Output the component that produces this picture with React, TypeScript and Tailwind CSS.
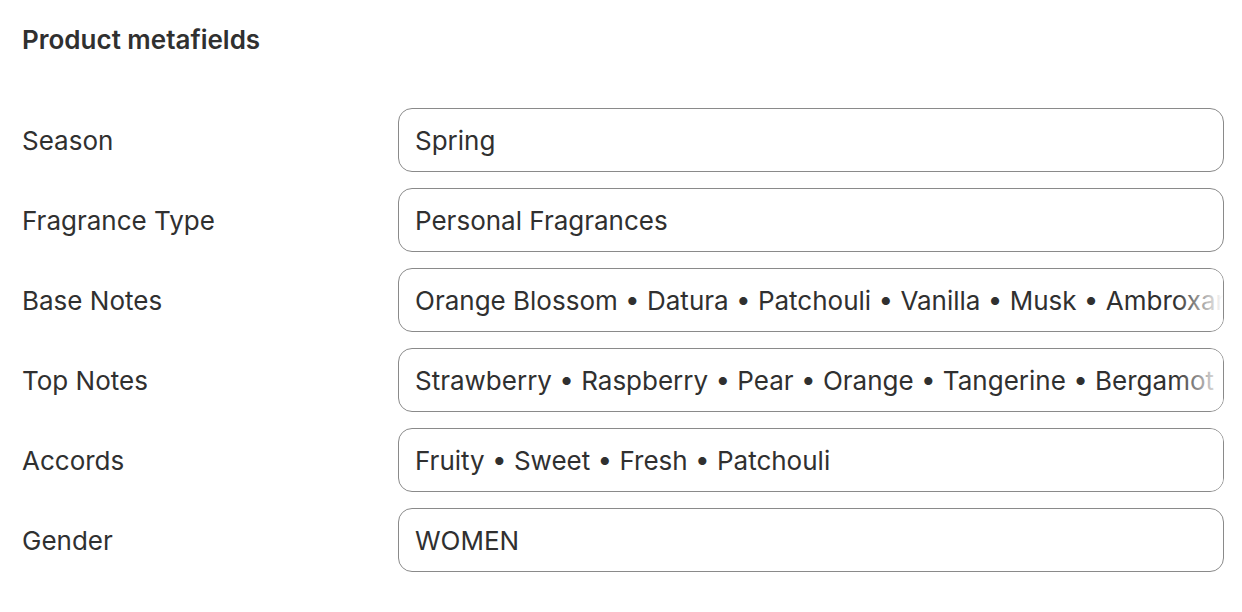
import React from "react";

const rows: { label: string; value: string; fade?: boolean }[] = [
  { label: "Season", value: "Spring" },
  { label: "Fragrance Type", value: "Personal Fragrances" },
  { label: "Base Notes", value: "Orange Blossom • Datura • Patchouli • Vanilla • Musk • Ambroxan", fade: true },
  { label: "Top Notes", value: "Strawberry • Raspberry • Pear • Orange • Tangerine • Bergamot", fade: true },
  { label: "Accords", value: "Fruity • Sweet • Fresh • Patchouli", fade: true },
  { label: "Gender", value: "WOMEN" },
];

export default function App() {
  return (
    <div
      className="w-[1242px] h-[612px] bg-white text-[#303030] pl-[22px] pr-[18px] pt-[24px]"
      style={{ fontFamily: "Inter, 'Noto Sans', sans-serif" }}
    >
      <h2 className="text-[26px] leading-[32px] font-semibold">Product metafields</h2>
      <div className="mt-[52px] flex flex-col gap-[16px]">
        {rows.map((r) => (
          <div key={r.label} className="flex items-center">
            <div className="w-[376px] text-[26px]">{r.label}</div>
            <div className="relative flex-1 h-[64px] border border-[#8a8a8a] rounded-[14px] overflow-hidden flex items-center">
              <div className="pl-[16px] text-[26px] whitespace-nowrap">{r.value}</div>
              {r.fade && (
                <div className="absolute right-0 top-0 bottom-0 w-[48px] bg-gradient-to-r from-white/0 to-white" />
              )}
            </div>
          </div>
        ))}
      </div>
    </div>
  );
}
